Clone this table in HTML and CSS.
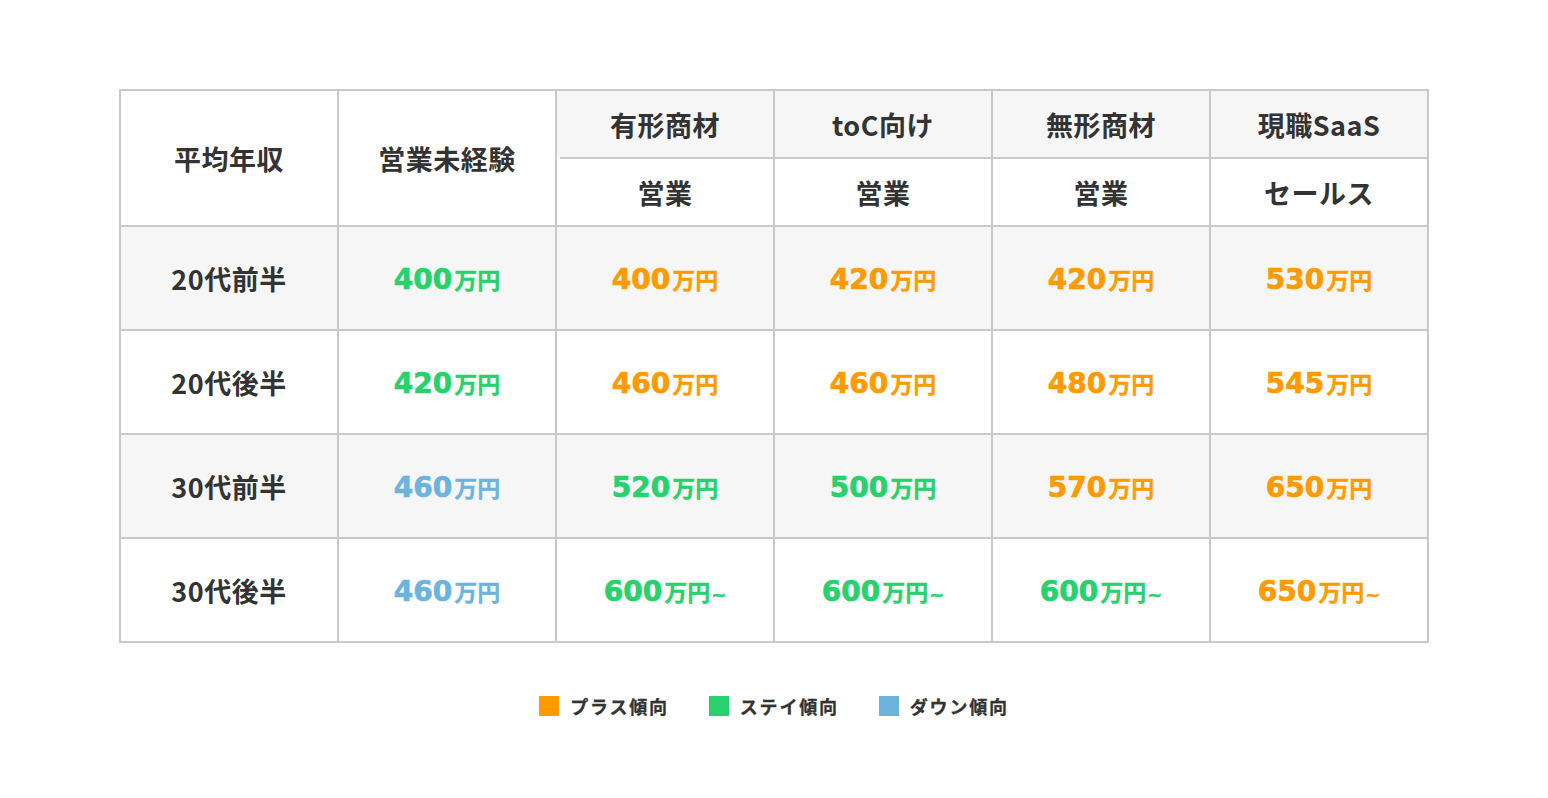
FILE: index.html
```html
<!DOCTYPE html>
<html lang="ja">
<head>
<meta charset="utf-8">
<title>平均年収</title>
<link rel="stylesheet" href="styles.css">
</head>
<body>
<main class="page">
  <div class="table">
    <div class="cell head span2 white">平均年収</div>
    <div class="cell head span2 white">営業未経験</div>
    <div class="cell head gray">有形商材</div>
    <div class="cell head gray">toC向け</div>
    <div class="cell head gray">無形商材</div>
    <div class="cell head gray">現職SaaS</div>
    <div class="cell head white first-sub">営業</div>
    <div class="cell head white">営業</div>
    <div class="cell head white">営業</div>
    <div class="cell head white">セールス</div>

    <div class="cell label gray">20代前半</div>
    <div class="cell gray"><span class="val green"><span class="num">400</span><span class="unit">万円</span></span></div>
    <div class="cell gray"><span class="val orange"><span class="num">400</span><span class="unit">万円</span></span></div>
    <div class="cell gray"><span class="val orange"><span class="num">420</span><span class="unit">万円</span></span></div>
    <div class="cell gray"><span class="val orange"><span class="num">420</span><span class="unit">万円</span></span></div>
    <div class="cell gray"><span class="val orange"><span class="num">530</span><span class="unit">万円</span></span></div>

    <div class="cell label white">20代後半</div>
    <div class="cell white"><span class="val green"><span class="num">420</span><span class="unit">万円</span></span></div>
    <div class="cell white"><span class="val orange"><span class="num">460</span><span class="unit">万円</span></span></div>
    <div class="cell white"><span class="val orange"><span class="num">460</span><span class="unit">万円</span></span></div>
    <div class="cell white"><span class="val orange"><span class="num">480</span><span class="unit">万円</span></span></div>
    <div class="cell white"><span class="val orange"><span class="num">545</span><span class="unit">万円</span></span></div>

    <div class="cell label gray">30代前半</div>
    <div class="cell gray"><span class="val blue"><span class="num">460</span><span class="unit">万円</span></span></div>
    <div class="cell gray"><span class="val green"><span class="num">520</span><span class="unit">万円</span></span></div>
    <div class="cell gray"><span class="val green"><span class="num">500</span><span class="unit">万円</span></span></div>
    <div class="cell gray"><span class="val orange"><span class="num">570</span><span class="unit">万円</span></span></div>
    <div class="cell gray"><span class="val orange"><span class="num">650</span><span class="unit">万円</span></span></div>

    <div class="cell label white">30代後半</div>
    <div class="cell white"><span class="val blue"><span class="num">460</span><span class="unit">万円</span></span></div>
    <div class="cell white"><span class="val green"><span class="num">600</span><span class="unit">万円</span><span class="tilde">~</span></span></div>
    <div class="cell white"><span class="val green"><span class="num">600</span><span class="unit">万円</span><span class="tilde">~</span></span></div>
    <div class="cell white"><span class="val green"><span class="num">600</span><span class="unit">万円</span><span class="tilde">~</span></span></div>
    <div class="cell white"><span class="val orange"><span class="num">650</span><span class="unit">万円</span><span class="tilde">~</span></span></div>
  </div>

  <ul class="legend">
    <li class="legend-item"><span class="swatch sw-orange"></span>プラス傾向</li>
    <li class="legend-item"><span class="swatch sw-green"></span>ステイ傾向</li>
    <li class="legend-item"><span class="swatch sw-blue"></span>ダウン傾向</li>
  </ul>
</main>
</body>
</html>
```

FILE: styles.css
```css
* { box-sizing: border-box; }
html, body { margin: 0; padding: 0; background: #fff; }
body {
  font-family: "Noto Sans CJK JP", "Noto Sans", sans-serif;
  color: #333;
}
.page {
  padding-top: 89px;
  display: flex;
  flex-direction: column;
  align-items: center;
}
.table {
  display: grid;
  grid-template-columns: repeat(6, 216px);
  grid-template-rows: 66px 66px repeat(4, 102px);
  gap: 2px;
  padding: 2px;
  background: #c9c9c9;
  width: 1310px;
}
.cell {
  display: flex;
  align-items: center;
  justify-content: center;
  position: relative;
}
.white { background: #fff; }
.gray { background: #f6f6f6; }
.span2 { grid-row: span 2; }
.head, .label {
  font-size: 27px;
  font-weight: 700;
  letter-spacing: 0.5px;
  color: #333;
}
.first-sub::before {
  content: "";
  position: absolute;
  top: -2px;
  left: 0;
  width: 3px;
  height: 2px;
  background: #fff;
}
.val {
  display: inline-flex;
  align-items: baseline;
  font-weight: 700;
  padding-top: 2px;
}
.num {
  font-family: "DejaVu Sans", sans-serif;
  font-size: 28px;
  font-weight: 700;
  -webkit-text-stroke: 0.7px currentColor;
}
.unit {
  font-family: "Noto Sans CJK JP", sans-serif;
  font-size: 23px;
  font-weight: 700;
  margin-left: 2px;
  -webkit-text-stroke: 0.3px currentColor;
}
.tilde {
  font-family: "DejaVu Sans", sans-serif;
  font-size: 18px;
  font-weight: 700;
  margin-left: 1px;
  -webkit-text-stroke: 0.5px currentColor;
}
.green { color: #27d16b; }
.orange { color: #ff9a00; }
.blue { color: #6cb4dd; }

.legend {
  list-style: none;
  margin: 53px 0 0;
  padding: 0;
  display: flex;
  gap: 40px;
  height: 20px;
}
.legend-item {
  display: flex;
  align-items: center;
  gap: 11px;
  font-size: 18px;
  font-weight: 700;
  letter-spacing: 1.8px;
  color: #333;
  line-height: 20px;
  -webkit-text-stroke: 0.3px currentColor;
}
.swatch {
  width: 20px;
  height: 20px;
  flex: none;
}
.sw-orange { background: #ff9a00; }
.sw-green { background: #27d16b; }
.sw-blue { background: #6cb4dd; }
```
